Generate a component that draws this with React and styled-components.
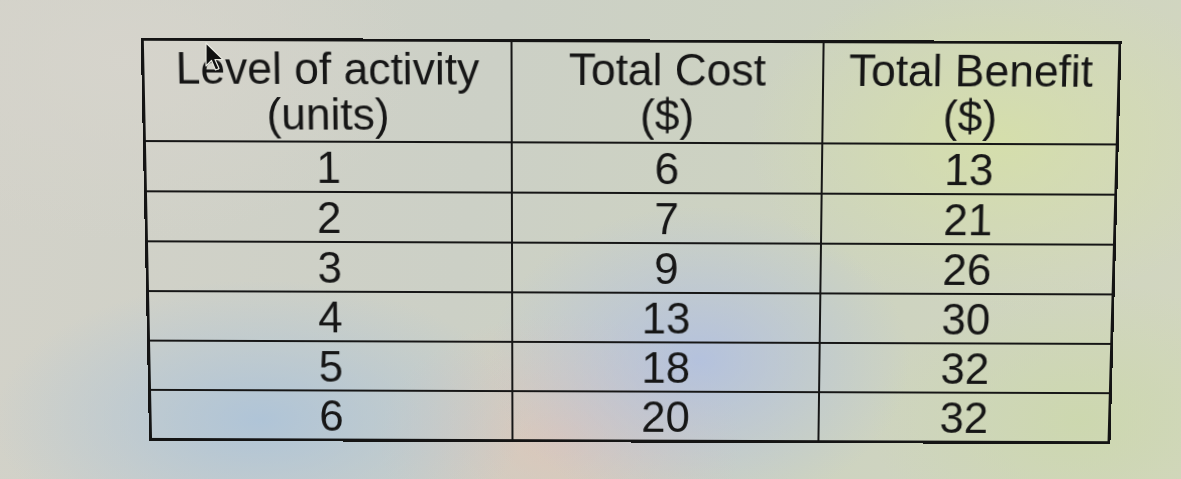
import styled, { createGlobalStyle } from 'styled-components';

const Global = createGlobalStyle`
  html, body {
    margin: 0;
    padding: 0;
    height: 100%;
  }
  body {
    width: 1181px;
    height: 479px;
    overflow: hidden;
    font-family: "Liberation Sans", Arial, sans-serif;
    background:
      radial-gradient(ellipse 420px 260px at 120px 60px, rgba(214, 212, 204, 0.95), rgba(214, 212, 204, 0) 70%),
      radial-gradient(ellipse 380px 200px at 260px 420px, rgba(170, 194, 218, 0.85), rgba(170, 194, 218, 0) 70%),
      radial-gradient(ellipse 300px 220px at 700px 360px, rgba(172, 188, 230, 0.75), rgba(172, 188, 230, 0) 70%),
      radial-gradient(ellipse 360px 240px at 1000px 140px, rgba(214, 224, 168, 0.85), rgba(214, 224, 168, 0) 70%),
      radial-gradient(ellipse 300px 200px at 1080px 420px, rgba(204, 216, 172, 0.85), rgba(204, 216, 172, 0) 70%),
      radial-gradient(ellipse 260px 180px at 560px 440px, rgba(226, 194, 182, 0.65), rgba(226, 194, 182, 0) 70%),
      linear-gradient(100deg, #d3d2c9 0%, #ccd0c6 40%, #cdd3c0 70%, #d2d6c0 100%);
  }
`

const Page = styled.main`
  position: relative;
  padding: 41px 0 0 145px;
`

const Grid = styled.table`
  border-collapse: collapse;
  border: 3px solid #141414;
  color: #161616;
  font-size: 44px;
  line-height: 45px;
  transform: perspective(1400px) rotateX(-4deg) rotate(0.2deg);
  transform-origin: 50% 50%;
`

const Head = styled.th`
  font-weight: 400;
  width: ${p => p.w}px;
  height: 98px;
  padding: 0;
  border: 2px solid #161616;
  text-align: center;
  vertical-align: middle;
`

const Cell = styled.td`
  height: 48px;
  padding: 0;
  border: 2px solid #161616;
  text-align: center;
  vertical-align: middle;
`

const Cursor = styled.svg`
  position: absolute;
  left: 204px;
  top: 42px;
  width: 22px;
  height: 30px;
`

const rows = [
  [1, 6, 13],
  [2, 7, 21],
  [3, 9, 26],
  [4, 13, 30],
  [5, 18, 32],
  [6, 20, 32],
]

export default function App() {
  return (
    <>
      <Global />
      <Page>
        <Grid>
          <thead>
            <tr>
              <Head w={363}>Level of activity<br />(units)</Head>
              <Head w={307}>Total Cost<br />($)</Head>
              <Head w={291}>Total Benefit<br />($)</Head>
            </tr>
          </thead>
          <tbody>
            {rows.map(r => (
              <tr key={r[0]}>
                <Cell>{r[0]}</Cell>
                <Cell>{r[1]}</Cell>
                <Cell>{r[2]}</Cell>
              </tr>
            ))}
          </tbody>
        </Grid>
        <Cursor viewBox="0 0 22 30">
          <path d="M2 1 L2 24 L7.5 18.5 L11.5 28 L15 26.5 L11 17.5 L19 17.5 Z" fill="#111" stroke="#e8e8e0" strokeWidth="1.2" strokeLinejoin="round" />
        </Cursor>
      </Page>
    </>
  )
}
